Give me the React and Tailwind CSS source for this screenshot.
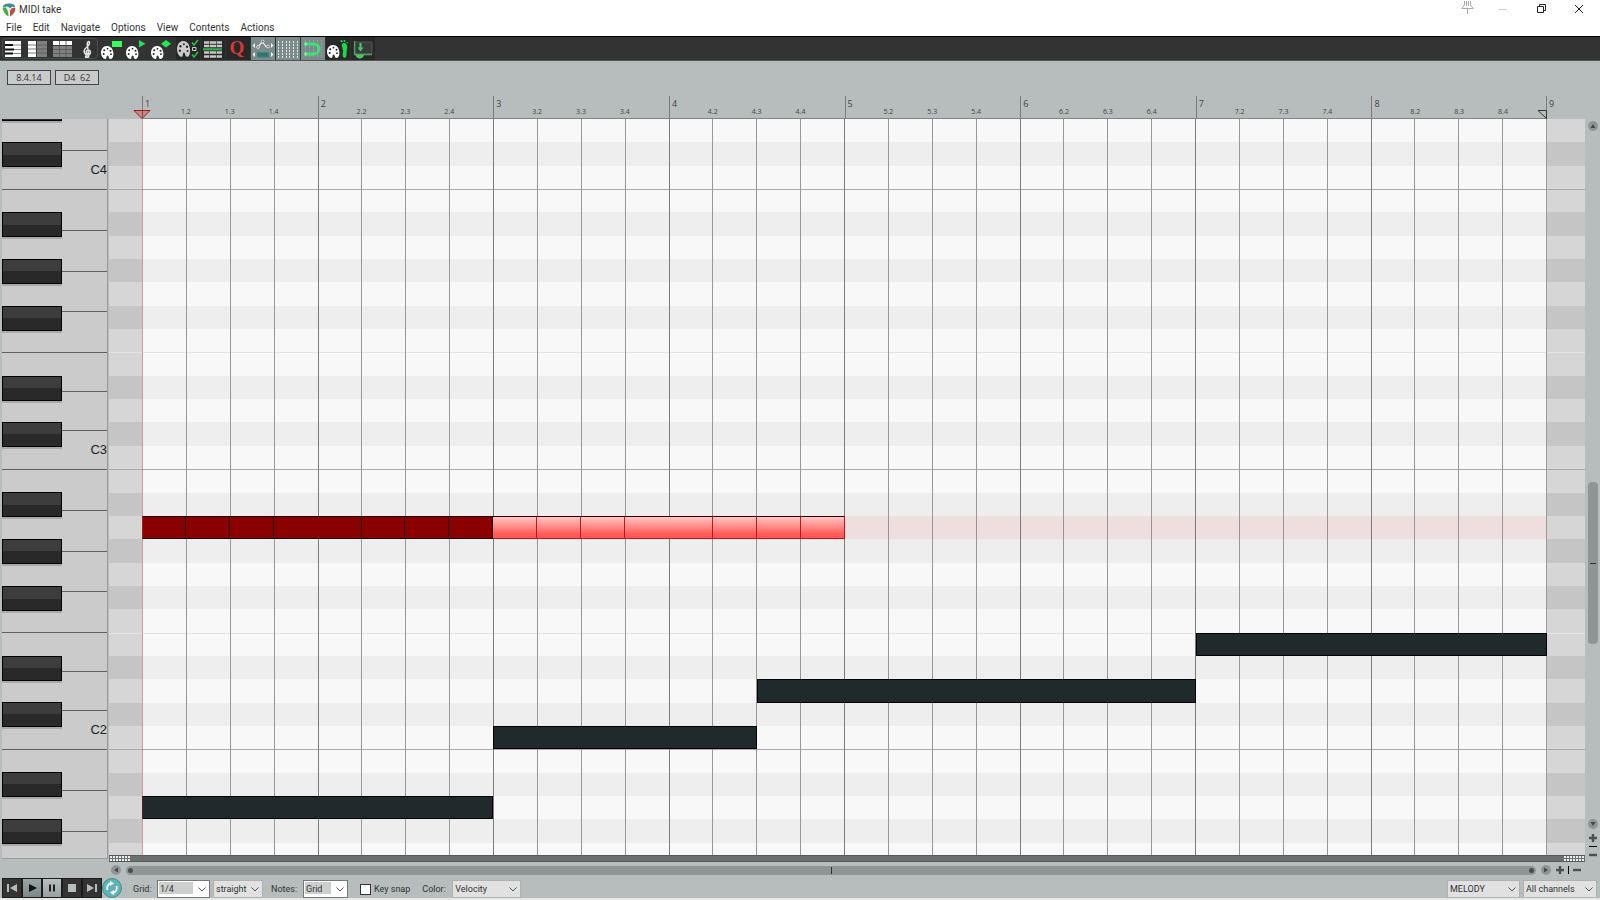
import { useState } from 'react';

const MENUS = ['File', 'Edit', 'Navigate', 'Options', 'View', 'Contents', 'Actions'];
const BEATS = Array.from({ length: 32 }, (_, i) => i);

// rows run downwards from D4
const NAMES = ['D', 'C#', 'C', 'B', 'A#', 'A', 'G#', 'G', 'F#', 'F', 'E', 'D#'];
const ROWS = Array.from({ length: 32 }, (_, i) => NAMES[i % 12]);

const NOTES = [
  { row: 17, start: 0, end: 1, kind: 'dark' },
  { row: 17, start: 1, end: 2, kind: 'dark' },
  { row: 17, start: 2, end: 3, kind: 'dark' },
  { row: 17, start: 3, end: 5, kind: 'dark' },
  { row: 17, start: 5, end: 6, kind: 'dark' },
  { row: 17, start: 6, end: 7, kind: 'dark' },
  { row: 17, start: 7, end: 8, kind: 'dark' },
  { row: 17, start: 8, end: 9, kind: 'selected' },
  { row: 17, start: 9, end: 10, kind: 'selected' },
  { row: 17, start: 10, end: 11, kind: 'selected' },
  { row: 17, start: 11, end: 13, kind: 'selected' },
  { row: 17, start: 13, end: 14, kind: 'selected' },
  { row: 17, start: 14, end: 15, kind: 'selected' },
  { row: 17, start: 15, end: 16, kind: 'selected' },
  { row: 22, start: 24, end: 32, kind: 'bass' },
  { row: 24, start: 14, end: 24, kind: 'bass' },
  { row: 26, start: 8, end: 14, kind: 'bass' },
  { row: 29, start: 0, end: 8, kind: 'bass' }
];

const NOTE_STYLES = {
  dark: 'bg-[#8b0000] border-y border-r border-[#200000]',
  selected: 'bg-linear-to-b from-[#ffc4c4] to-[#ff5a5a] to-80% border-r border-b border-t border-r-[#c01818] border-b-[#d01010] border-t-[#300000]',
  bass: 'bg-[#20292b] border border-black'
};

const Logo = () => (
  <svg width="14" height="14" viewBox="0 0 14 14">
    <path d="M1 4Q1 1 7 .5Q13 1 13 4Q13 9 9 13Q7 14 5 12Q1 8 1 4Z" fill="#e8efee" />
    <path d="M.8 4.500Q1 .5 7 .5Q13 .5 13.200 4.500L10 3.500L8 5.500Q7 3 4 3.500Z" fill="#3a8a90" />
    <path d="M.6 4.500L4 4.500Q6.500 8 6.500 13.500Q1 10.500 .6 4.500Z" fill="#4cae3c" />
    <path d="M13.400 5L10 5L8 7.500L8 13.500Q13.400 10.500 13.400 5Z" fill="#b5524c" />
  </svg>
);

const Palette = ({ fill = '#fff', shift = '' }) => (
  <g transform={shift}>
    <path
      d="M7 9C3 9 1 12.500 1 15.500C1 19 3 22 5.500 22C7.200 22 5.800 19 7.500 18.500C9.200 18.500 8.200 22 10.500 22C12.800 22 13.800 18.500 13.300 15.500C12.800 12 11 9 7 9Z"
      fill={fill}
    />
    <circle cx="4.200" cy="13.300" r="1" fill="#222" />
    <circle cx="7.500" cy="11.700" r=".9" fill="#222" />
    <circle cx="10.500" cy="13.700" r="1" fill="#222" />
    <circle cx="3.700" cy="17" r="1" fill="#222" />
    <circle cx="11" cy="17.200" r=".9" fill="#222" />
  </g>
);

const TOOLS = [
  {
    label: 'Piano roll view',
    icon: (
      <>
        <path d="M4 4h16v16H4z" fill="#fff" />
        <path d="M4 8h16M4 12.500h16M4 16.500h16" stroke="#666" strokeWidth=".8" />
        <path d="M4 8h8M4 12.500h9M4 16.500h8" stroke="#111" strokeWidth="1.800" />
      </>
    )
  },
  {
    label: 'Named notes view',
    icon: (
      <>
        <path d="M2 4h8v16H2z" fill="#fff" />
        <path d="M11 4h10v16H11z" fill="#808080" />
        <path d="M2 8h19M2 12h19M2 16h19" stroke="#555" strokeWidth=".8" />
      </>
    )
  },
  {
    label: 'Event list view',
    icon: (
      <>
        <path d="M2 4h19v4H2z" fill="#fff" />
        <path d="M2 9h19v11H2z" fill="#808080" />
        <path d="M2 12.500h19M2 16.500h19M8.500 4v16M15 4v16" stroke="#555" strokeWidth=".8" />
      </>
    )
  },
  {
    label: 'Notation view',
    icon: (
      <g fill="none" stroke="#e4e4e4" strokeWidth="1.500" strokeLinecap="round">
        <path d="M11.500 16.500C9.500 16 9.800 13.200 12 13C15 13 15.500 17.500 12 18C8.500 18 7 14.500 9 12C11 9.500 14 8.500 13.500 5.500C13 3.500 11.300 4.500 11.200 7L12.800 18.500C13 21 10.500 21.200 9.800 20" />
        <circle cx="10.300" cy="19.600" r=".8" fill="#e4e4e4" />
      </g>
    )
  },
  {
    label: 'Color by track',
    icon: (
      <>
        <Palette shift="translate(-1 0)" />
        <path d="M11 4h10v6H11z" fill="#3cf860" />
      </>
    )
  },
  {
    label: 'Color by take',
    icon: (
      <>
        <Palette shift="translate(-1 0)" />
        <path d="M13 3v7.500l6.500-3.700z" fill="#20e060" />
      </>
    )
  },
  {
    label: 'Color by item',
    icon: (
      <>
        <Palette shift="translate(-1 0)" />
        <path d="M10 6.800L15 3l5 3.800L15 10.500z" fill="#20e850" />
      </>
    )
  },
  {
    label: 'Color map',
    icon: (
      <>
        <Palette fill="#ccc" shift="translate(0 -7) scale(1.050 1.220)" />
        <path d="M16 5.500l2 2.500l4-5M16 17.500l2 2.500l4-5" fill="none" stroke="#20c040" strokeWidth="1.600" />
        <path d="M16.500 10.500h3.500v3h-3.500z" fill="none" stroke="#ccc" />
      </>
    )
  },
  {
    label: 'Track list',
    icon: (
      <>
        <path d="M3 5.500h18M3 9h18M3 15.500h18M3 19.500h18" stroke="#c8c8c8" strokeWidth="2.600" />
        <path d="M8.500 3v18M15.500 3v18" stroke="#444" strokeWidth=".8" />
        <path d="M2 12.300h19" stroke="#2fb24c" strokeWidth="2.200" />
      </>
    )
  },
  {
    label: 'Quantize',
    icon: (
      <text x="11" y="17" textAnchor="middle" fill="#d23a3a" className="font-['Liberation_Serif',serif] text-[19px] font-bold">
        Q
      </text>
    )
  },
  {
    label: 'CC envelopes',
    active: true,
    icon: (
      <>
        <path d="M7 9.500L11.500 5L15 9.500L18 9" fill="none" stroke="#e8eded" strokeWidth="1.200" />
        <circle cx="7" cy="10" r="1.400" fill="#667" stroke="#e8eded" strokeWidth=".9" />
        <circle cx="11.500" cy="4.500" r="1.400" fill="#667" stroke="#e8eded" strokeWidth=".9" />
        <circle cx="17" cy="9.500" r="1.400" fill="#667" stroke="#e8eded" strokeWidth=".9" />
        <path d="M4 6v5L1.500 8.500zM20 6v5L22.500 8.500zM4 15v5L1.500 17.500zM20 15v5L22.500 17.500z" fill="#f2f5f5" />
        <path d="M6.500 15.500h11v4.500H6.500z" fill="#2d7777" stroke="#437f7f" />
      </>
    )
  },
  {
    label: 'Show grid',
    active: true,
    icon: <path d="M2.500 4v17M6.500 4v17M10.500 4v17M13.500 4v17M17.500 4v17M21.500 4v17" stroke="#e5eaea" strokeDasharray="2 1" />
  },
  {
    label: 'Snap to grid',
    active: true,
    icon: (
      <>
        <path d="M4.500 3v18M8.500 3v18M12.500 3v18M16.500 3v18M20.500 3v18" stroke="#9aa7a7" strokeWidth=".8" strokeDasharray="2 1" />
        <path d="M4 7h9a5 5 0 0 1 0 10H4" fill="none" stroke="#3ae376" strokeWidth="3" />
        <path d="M3.500 5.500h2v3h-2zM3.500 15.500h2v3h-2z" fill="#90f5b5" />
      </>
    )
  },
  {
    label: 'Step recording',
    icon: (
      <>
        <Palette shift="translate(0 -1)" />
        <path d="M16.500 6.500C19.500 5 22 8 21 12C20 15 21.500 18.500 19.500 20.500C17 21.500 16 18.500 17 15.500C17.800 12.500 14.500 9 16.500 6.500Z" fill="#18dc4c" />
        <circle cx="15.500" cy="4.200" r="1.100" fill="#18dc4c" />
        <circle cx="18.500" cy="4" r="1" fill="#18dc4c" />
        <circle cx="21.300" cy="5.700" r=".8" fill="#18dc4c" />
      </>
    )
  },
  {
    label: 'Dock editor',
    icon: (
      <>
        <path d="M4 5h17v12H4z" fill="#3b3b3b" stroke="#555" />
        <path d="M3.500 4v13.500h17.500" fill="none" stroke="#4aa863" strokeWidth="1.300" />
        <path d="M9.500 6v6" stroke="#49c56b" strokeWidth="2.200" />
        <path d="M6.500 10.500h6l-3 4zM4.500 18h8.500q-1 3.500-4.200 3.500T4.500 18z" fill="#49c56b" />
      </>
    )
  }
];

const TRANSPORT = [
  { label: 'Go to start', path: 'M5 6h2v8H5zM15 6v8l-7-4z', tone: 'bg-[#333]', fill: '#b7bdbc' },
  { label: 'Play', path: 'M7 6v8l8-4z', tone: 'bg-linear-to-b from-[#9aa6a5] to-[#7d8988]', fill: '#111' },
  { label: 'Pause', path: 'M7 6.500h2v7H7zM11 6.500h2v7h-2z', tone: 'bg-linear-to-b from-[#b9bfbf] to-[#97a0a0]', fill: '#222' },
  { label: 'Stop', path: 'M6 6h8v8H6z', tone: 'bg-[#333]', fill: '#b7bdbc' },
  { label: 'Go to end', path: 'M5 6v8l7-4zM13 6h2v8h-2z', tone: 'bg-[#333]', fill: '#b7bdbc' }
];

const Octave = ({ label }) => (
  <div className="relative h-[280px] shrink-0">
    <div className="flex h-[163px] flex-col">
      {['B', 'A', 'G', 'F'].map(key => (
        <div key={key} className="flex-1 border-t border-[#606060]" />
      ))}
    </div>
    <div className="flex h-[117px] flex-col">
      <div className="flex-1 border-t border-[#606060]" />
      <div className="flex-1 border-t border-[#606060]" />
      <div className="flex flex-1 items-center justify-end border-t border-[#606060] text-[13px] leading-4 text-[#222]">
        {label}
      </div>
    </div>
    <div className="absolute top-0 left-0 grid h-full w-[60px] grid-rows-12">
      {['B', 'A#', 'A', 'G#', 'G', 'F#', 'F', 'E', 'D#', 'D', 'C#', 'C'].map(key => (
        <div key={key}>
          {key.includes('#') && (
            <div className="h-[25px] border border-black bg-linear-to-b from-[#3d3d3d] from-50% to-[#292929] to-50% shadow-[0_2px_0_#a9a9a9]" />
          )}
        </div>
      ))}
    </div>
  </div>
);

const RoundArrow = ({ label, path }) => (
  <button aria-label={label} className="shrink-0">
    <svg width="10" height="10" viewBox="0 0 10 10" className="block">
      <circle cx="5" cy="5" r="5" fill="#8f9595" />
      <path d={path} fill="#444a4a" />
    </svg>
  </button>
);

const Zoom = ({ label, path }) => (
  <button aria-label={label} className="shrink-0">
    <svg width="8" height="8" viewBox="0 0 8 8" className="block">
      <path d={path} stroke="#4a4f4f" strokeWidth="2.400" />
    </svg>
  </button>
);

const Select = ({ id, label, value, width, tone = 'bg-[#e1e1e1] border-[#b0b0b0]', mark = '' }) => (
  <div className={`relative h-[18px] border ${width} ${tone}`}>
    {mark && <span className={`absolute top-px left-px h-3 bg-[#cdcfcf] ${mark}`} />}
    <select id={id} aria-label={label} defaultValue={value} className="relative block h-4 w-full appearance-none bg-transparent pl-[2px] leading-4 outline-none">
      <option>{value}</option>
    </select>
    <svg width="8" height="5" viewBox="0 0 8 5" className="pointer-events-none absolute top-[6px] right-[3px]">
      <path d="M.5.5L4 4L7.500.5" fill="none" stroke="#555" />
    </svg>
  </div>
);

const Ruler = () => (
  <div className="pr-[53px] pl-[142px]">
    <div className="relative grid h-[23px] grid-cols-32 border-b border-[#808686] text-[#444]">
      {BEATS.map(beat => (
        beat % 4 === 0 ? (
          <div key={beat} className="border-l border-[#777d7d] pl-[2px] text-[9px] leading-4">
            {beat / 4 + 1}
          </div>
        ) : (
          <div key={beat} className="pt-3 text-[7px] leading-2">
            <span className="inline-block w-2 -translate-x-[5px] whitespace-nowrap">
              {Math.floor(beat / 4) + 1}.{beat % 4 + 1}
            </span>
          </div>
        )
      ))}
      <span className="absolute top-0 left-full -ml-px h-full border-l border-[#777d7d] pl-[2px] text-[9px] leading-4">9</span>
      <svg width="18" height="9" viewBox="0 0 18 9" className="absolute -bottom-px -left-[9px]">
        <path d="M1 .5h16L9 8.500z" fill="#c66" fillOpacity=".6" stroke="#a11c22" />
        <path d="M9.500 1v7" stroke="#844" />
      </svg>
      <svg width="9" height="9" viewBox="0 0 9 9" className="absolute right-0 -bottom-px">
        <path d="M0 .5h8.500v8z" fill="none" stroke="#333" />
      </svg>
    </div>
  </div>
);

const PianoRoll = () => (
  <div className="relative min-w-0 flex-1">
    <div className="relative h-[736px] overflow-hidden bg-[#d6d6d6]">
      <div className="relative h-[747px] pr-[38px] pl-[33px]">
        {/* key stripes, shaded outside of the item */}
        <div className="absolute inset-0 grid grid-rows-[repeat(32,minmax(0,1fr))]">
          {ROWS.map((name, i) => (
            <div
              key={i}
              className={`pr-[38px] pl-[33px] ${name.includes('#') ? 'bg-[#c5c5c5]' : ''} ${name === 'B' ? 'border-t border-[#aaa]' : ''} ${name === 'E' ? 'border-t border-[#e4e4e4]' : ''}`}
            >
              <div className={`h-full ${i === 17 ? 'bg-[#efdede]' : name.includes('#') ? 'bg-[#eeeeee]' : 'bg-[#f8f8f8]'}`} />
            </div>
          ))}
        </div>
        <div className="relative h-full">
          <div className="absolute inset-0 grid grid-cols-32 border-r border-[#999]">
            {BEATS.map(beat => (
              <div key={beat} className={beat === 0 ? '' : beat % 4 ? 'border-l border-[#979797]' : 'border-l border-[#7c7c7c]'} />
            ))}
          </div>
          <div className="relative grid h-full grid-cols-32 grid-rows-[repeat(32,minmax(0,1fr))]">
            {NOTES.map(note => (
              <div
                key={`${note.row}-${note.start}`}
                className={NOTE_STYLES[note.kind]}
                style={{ gridRow: note.row + 1, gridColumn: `${note.start + 1} / ${note.end + 1}` }}
              />
            ))}
          </div>
        </div>
      </div>
    </div>
    <div className="flex h-[7px] items-center justify-between border-y border-[#555a5a] bg-[#6b7070] px-px">
      <svg width="20" height="5"><path d="M0 1h20M0 4h20" stroke="#eee" strokeWidth="2" strokeDasharray="2 1" /></svg>
      <svg width="20" height="5"><path d="M0 1h20M0 4h20" stroke="#eee" strokeWidth="2" strokeDasharray="2 1" /></svg>
    </div>
    <div className="absolute top-0 bottom-0 left-[33px] w-px bg-[#b04048]/50" />
  </div>
);

const App = () => {
  const [keySnap, setKeySnap] = useState(false);

  return (
    <div className="flex min-h-screen flex-col bg-[#b6bdbc] font-['Roboto',sans-serif] text-[10px] text-[#333]">
      <header className="bg-white">
        <div className="flex h-5 items-center pl-[2px]">
          <Logo />
          <h1 className="ml-[3px] flex-1 leading-4">MIDI take</h1>
          <div className="flex h-[18px] items-start gap-6 pr-4">
            <button aria-label="Pin">
              <svg width="13" height="14" viewBox="0 0 13 14" fill="none" stroke="#aaa">
                <path d="M3.500 0v4L.8 7.500h11.400L9.500 4V0M5.500 0v5M7.500 0v5M6.500 8v5" />
              </svg>
            </button>
            <button aria-label="Minimize">
              <svg width="10" height="16" viewBox="0 0 10 16"><path d="M1 8.500h8" stroke="#ccc" /></svg>
            </button>
            <button aria-label="Restore" className="ml-1">
              <svg width="10" height="16" viewBox="0 0 10 16" fill="none" stroke="#222">
                <path d="M1.500 5.500h6v6h-6zM3.500 5V3.500h6v6H8" />
              </svg>
            </button>
            <button aria-label="Close" className="ml-1">
              <svg width="10" height="16" viewBox="0 0 10 16"><path d="M1 4l8 8M9 4l-8 8" stroke="#222" /></svg>
            </button>
          </div>
        </div>
        <nav className="flex h-4 items-center gap-[11px] pl-[6px] leading-4">
          {MENUS.map(menu => (
            <button key={menu}>{menu}</button>
          ))}
        </nav>
      </header>

      <div className="relative flex h-[25px] gap-px border-t border-b border-t-black border-b-[#555] bg-[#333] pl-px">
        <div className="pointer-events-none absolute top-px left-[2px] h-[21px] w-24 rounded border border-[#4c4c4c]" />
        {TOOLS.map((tool, i) => (
          <button key={tool.label} aria-label={tool.label} className={`w-6 ${tool.active ? 'bg-[#7b8a8a]' : i > 6 ? 'bg-[#282828]' : ''}`}>
            <svg width="24" height="23" viewBox="0 0 24 23" className="block">{tool.icon}</svg>
          </button>
        ))}
      </div>

      <div className="flex h-[35px] gap-1 pt-[9px] pl-[7px] font-['Open_Sans',sans-serif] text-[9px] leading-[13px]">
        <div className="h-[15px] w-11 border border-[#444] bg-[#c9cbcb] text-center">8.4.14</div>
        <div className="h-[15px] w-11 border border-[#444] bg-[#c9cbcb] text-center whitespace-pre">D4  62</div>
      </div>

      <div className="font-['Open_Sans',sans-serif]">
        <Ruler />
      </div>

      <main className="flex">
        <div className="mr-px ml-[2px] flex h-[740px] w-[106px] flex-col overflow-hidden border-r border-b border-[#989d9d] bg-[#cbcbcb] font-['Liberation_Sans',sans-serif]">
          <div className="-mt-[210px]">
            <Octave label="C4" />
            <Octave label="C3" />
            <Octave label="C2" />
            <Octave />
          </div>
        </div>
        <PianoRoll />
        <div className="flex w-[15px] flex-col items-center pt-[2px] pb-[3px]">
          <RoundArrow label="Scroll up" path="M5 3l2.500 4h-5z" />
          <div className="flex w-full flex-1 flex-col items-center pt-[351px] pb-[175px]">
            <div className="flex w-[10px] flex-1 items-center justify-center rounded bg-[#8f9595]">
              <span className="h-px w-[6px] bg-[#333]" />
            </div>
          </div>
          <RoundArrow label="Scroll down" path="M5 7l2.500-4h-5z" />
          <div className="flex flex-col items-center gap-1 pt-[5px]">
            <Zoom label="Zoom in vertically" path="M0 4h8M4 0v8" />
            <span className="h-px w-2 bg-black" />
            <Zoom label="Zoom out vertically" path="M0 4h8" />
          </div>
        </div>
      </main>

      <div className="flex h-4 items-center pr-[19px] pl-[111px]">
        <RoundArrow label="Scroll left" path="M3 5l4-2.500v5z" />
        <div className="mx-[5px] flex h-[9px] flex-1 items-center justify-between rounded-full bg-[#8f9595] px-[2px]">
          <span className="size-[5px] rounded-full bg-[#484d4d]" />
          <span className="h-[7px] w-px bg-[#333]" />
          <span className="size-[5px] rounded-full bg-[#484d4d]" />
        </div>
        <RoundArrow label="Scroll right" path="M7 5L3 2.500v5z" />
        <div className="flex items-center gap-1 pl-[5px]">
          <Zoom label="Zoom in" path="M0 4h8M4 0v8" />
          <span className="h-2 w-px bg-black" />
          <Zoom label="Zoom out" path="M0 4h8" />
        </div>
      </div>

      <footer className="flex h-[22px] items-end border-b-2 border-[#e6e8e8] pr-[3px] pl-[2px] text-[9px] leading-[18px]">
        <div className="flex">
          {TRANSPORT.map(item => (
            <button key={item.label} aria-label={item.label} className={`h-5 w-5 border border-[#1c1c1c] ${item.tone}`}>
              <svg width="18" height="18" viewBox="1 1 18 18" className="block"><path d={item.path} fill={item.fill} /></svg>
            </button>
          ))}
        </div>
        <button aria-label="Repeat">
          <svg width="20" height="20" viewBox="0 0 20 20" className="block">
            <circle cx="10" cy="10" r="9.500" fill="#5fb3b5" stroke="#448b8d" />
            <path d="M5.500 12A5 5 0 0 1 9 5.200M14.500 8A5 5 0 0 1 11 14.800" fill="none" stroke="#eafafa" strokeWidth="1.800" />
            <path d="M8 2.800l4 2.700l-4 2.500zM12 17.200l-4-2.700l4-2.500z" fill="#eafafa" />
          </svg>
        </button>
        <label htmlFor="grid" className="ml-[11px] w-6">Grid:</label>
        <Select id="grid" value="1/4" width="w-[53px]" tone="bg-white border-[#777]" mark="w-[34px]" />
        <div className="w-[3px]" />
        <Select label="Grid type" value="straight" width="w-[50px]" />
        <label htmlFor="notes" className="ml-2 w-8">Notes:</label>
        <Select id="notes" value="Grid" width="w-[45px]" tone="bg-white border-[#777]" mark="w-[26px]" />
        <label className="ml-3 flex items-center gap-[3px]">
          <input
            type="checkbox"
            checked={keySnap}
            onChange={(e) => setKeySnap(e.target.checked)}
            className="size-[11px] appearance-none border border-[#333] bg-white checked:bg-[#555]"
          />
          Key snap
        </label>
        <label htmlFor="color" className="ml-3 w-[30px]">Color:</label>
        <Select id="color" value="Velocity" width="w-[69px]" />
        <div className="flex-1" />
        <div className="flex gap-[3px]">
          <Select label="Track" value="MELODY" width="w-[73px]" />
          <Select label="Channel" value="All channels" width="w-[74px]" />
        </div>
      </footer>
    </div>
  );
};

export default App;
